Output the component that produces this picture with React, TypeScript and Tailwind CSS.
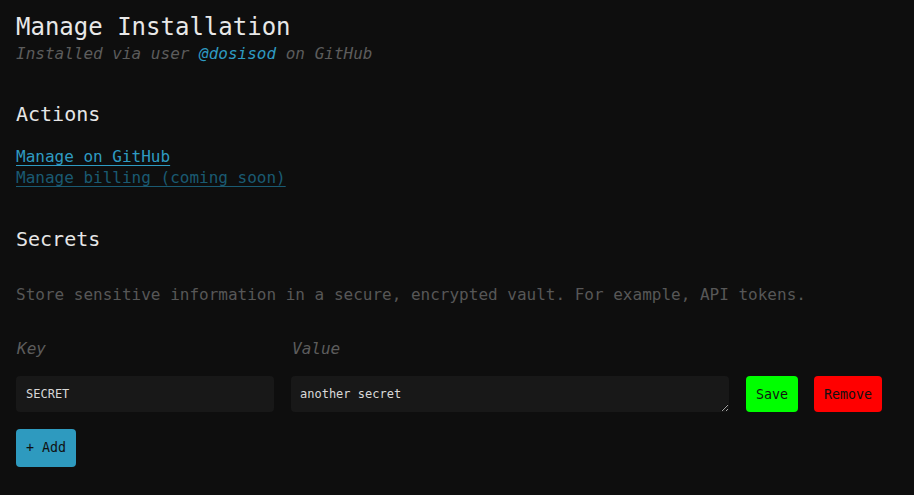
import React from "react";

export default function App() {
  return (
    <div
      className="min-h-[495px] w-full bg-[#0e0e0e] pl-4 pr-4"
      style={{ fontFamily: '"DejaVu Sans Mono", "Liberation Mono", monospace' }}
    >
      <div className="pt-[12px]">
        <h1 className="text-[24px] leading-[30px] text-[#e8e8e8]">Manage Installation</h1>
        <p className="text-[16px] leading-[24px] italic text-[#5c5c5c]">
          Installed via user <span className="text-[#2e9bc2]">@dosisod</span> on GitHub
        </p>
      </div>

      <h2 className="mt-[34px] text-[20px] leading-[28px] text-[#e6e6e6]">Actions</h2>
      <div className="mt-[18px] flex flex-col items-start">
        <a className="text-[16px] leading-[21px] text-[#2e9bc2] underline underline-offset-[3px]" href="#">
          Manage on GitHub
        </a>
        <a className="text-[16px] leading-[21px] text-[#1a5a72] underline underline-offset-[3px]" href="#">
          Manage billing (coming soon)
        </a>
      </div>

      <h2 className="mt-[37px] text-[20px] leading-[28px] text-[#e6e6e6]">Secrets</h2>
      <p className="mt-[30px] text-[16px] leading-[24px] text-[#575757]">
        Store sensitive information in a secure, encrypted vault. For example, API tokens.
      </p>

      <div className="mt-[30px] flex gap-[17px]">
        <div className="flex w-[258px] flex-col">
          <span className="text-[16px] leading-[24px] italic text-[#5c5c5c] pl-[1px]">Key</span>
          <input
            className="mt-[15px] h-[36px] rounded-[4px] bg-[#181818] pl-[10px] text-[12px] text-[#d8d8d8] outline-none"
            defaultValue="SECRET"
            style={{ fontFamily: '"DejaVu Sans Mono", monospace' }}
          />
        </div>
        <div className="flex w-[438px] flex-col">
          <span className="text-[16px] leading-[24px] italic text-[#5c5c5c] pl-[1px]">Value</span>
          <textarea
            className="mt-[15px] h-[36px] resize-y rounded-[4px] bg-[#181818] pl-[9px] pt-[10px] text-[12px] leading-[16px] text-[#d8d8d8] outline-none"
            defaultValue="another secret"
            style={{ fontFamily: '"DejaVu Sans Mono", monospace' }}
          />
        </div>
        <div className="flex flex-col justify-end">
          <div className="flex gap-[16px]">
            <button className="h-[36px] w-[52px] rounded-[4px] bg-[#00ff00] pt-[2px] text-[13.33px] text-[#111]">
              Save
            </button>
            <button className="h-[36px] w-[68px] rounded-[4px] bg-[#ff0000] pt-[2px] text-[13.33px] text-[#111]">
              Remove
            </button>
          </div>
        </div>
      </div>

      <button className="mt-[17px] h-[38px] w-[60px] rounded-[4px] bg-[#2e9abf] text-[13.33px] text-[#111]">
        + Add
      </button>
    </div>
  );
}
